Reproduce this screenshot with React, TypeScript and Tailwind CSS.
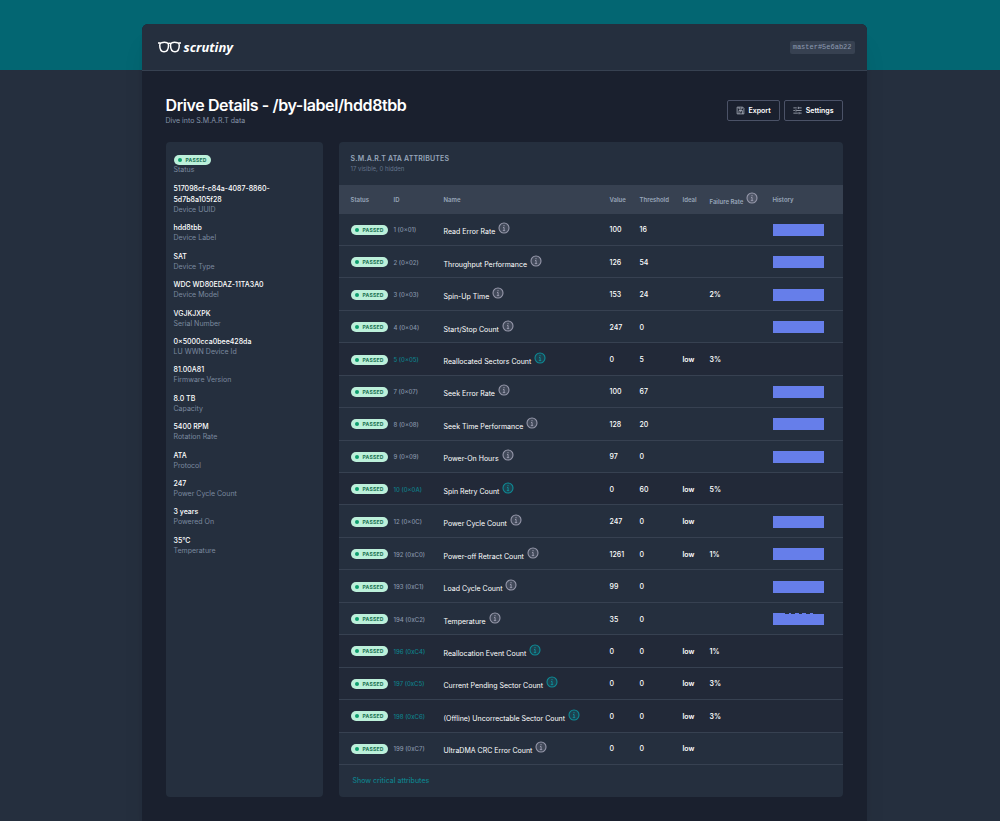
import { useState } from "react";
import type { ReactNode } from "react";
import clsx from "clsx";

type Attribute = {
  id: string;
  name: string;
  value: number;
  threshold: number;
  ideal?: string;
  failureRate?: string;
  critical?: boolean;
  history?: "flat" | "varied";
};

const details = [
  { label: "Device UUID", value: "517098cf-c84a-4087-8860-5d7b8a105f28" },
  { label: "Device Label", value: "hdd8tbb" },
  { label: "Device Type", value: "SAT" },
  { label: "Device Model", value: "WDC WD80EDAZ-11TA3A0" },
  { label: "Serial Number", value: "VGJKJXPK" },
  { label: "LU WWN Device Id", value: "0×5000cca0bee428da" },
  { label: "Firmware Version", value: "81.00A81" },
  { label: "Capacity", value: "8.0 TB" },
  { label: "Rotation Rate", value: "5400 RPM" },
  { label: "Protocol", value: "ATA" },
  { label: "Power Cycle Count", value: "247" },
  { label: "Powered On", value: "3 years" },
  { label: "Temperature", value: "35°C" },
];

const attributes: Attribute[] = [
  { id: "1 (0×01)", name: "Read Error Rate", value: 100, threshold: 16, history: "flat" },
  { id: "2 (0×02)", name: "Throughput Performance", value: 126, threshold: 54, history: "flat" },
  { id: "3 (0×03)", name: "Spin-Up Time", value: 153, threshold: 24, failureRate: "2%", history: "flat" },
  { id: "4 (0×04)", name: "Start/Stop Count", value: 247, threshold: 0, history: "flat" },
  { id: "5 (0×05)", name: "Reallocated Sectors Count", value: 0, threshold: 5, ideal: "low", failureRate: "3%", critical: true },
  { id: "7 (0×07)", name: "Seek Error Rate", value: 100, threshold: 67, history: "flat" },
  { id: "8 (0×08)", name: "Seek Time Performance", value: 128, threshold: 20, history: "flat" },
  { id: "9 (0×09)", name: "Power-On Hours", value: 97, threshold: 0, history: "flat" },
  { id: "10 (0×0A)", name: "Spin Retry Count", value: 0, threshold: 60, ideal: "low", failureRate: "5%", critical: true },
  { id: "12 (0×0C)", name: "Power Cycle Count", value: 247, threshold: 0, ideal: "low", history: "flat" },
  { id: "192 (0xC0)", name: "Power-off Retract Count", value: 1261, threshold: 0, ideal: "low", failureRate: "1%", history: "flat" },
  { id: "193 (0xC1)", name: "Load Cycle Count", value: 99, threshold: 0, history: "flat" },
  { id: "194 (0xC2)", name: "Temperature", value: 35, threshold: 0, history: "varied" },
  { id: "196 (0xC4)", name: "Reallocation Event Count", value: 0, threshold: 0, ideal: "low", failureRate: "1%", critical: true },
  { id: "197 (0xC5)", name: "Current Pending Sector Count", value: 0, threshold: 0, ideal: "low", failureRate: "3%", critical: true },
  { id: "198 (0xC6)", name: "(Offline) Uncorrectable Sector Count", value: 0, threshold: 0, ideal: "low", failureRate: "3%", critical: true },
  { id: "199 (0xC7)", name: "UltraDMA CRC Error Count", value: 0, threshold: 0, ideal: "low" },
];

function Logo() {
  return (
    <a href="#" className="flex items-center gap-[3px] text-white">
      <svg width="23" height="12" viewBox="0 0 46 24" fill="none" stroke="currentColor">
        <path d="M0 4h5M41 4h5M20 5.5c2-1.500 4-1.500 6 0" strokeWidth="3" />
        <path d="M7 3.500c4-1 8-1 11 0 2 .5 3 2 3 5 0 8-3 13-9 13s-8.500-5-8.500-13c0-3 1-4.500 3.500-5Z" strokeWidth="3" />
        <path d="M28 3.500c3-1 7-1 11 0 2.500.5 3.500 2 3.500 5 0 8-2.500 13-8.500 13s-9-5-9-13c0-3 1-4.500 3-5Z" strokeWidth="3" />
      </svg>
      <span className="font-['Open_Sans'] text-[13px] leading-4 font-bold italic">scrutiny</span>
    </a>
  );
}

function InfoIcon({ critical }: { critical?: boolean }) {
  return (
    <svg
      width="12"
      height="12"
      viewBox="0 0 24 24"
      fill="none"
      stroke="currentColor"
      className={clsx("ml-[3px] inline-block align-baseline", critical ? "text-[#0f8a95]" : "text-[#9698aa]")}
    >
      <circle cx="12" cy="12" r="10" strokeWidth="2.2" fill="currentColor" fillOpacity="0.25" />
      <path d="M12 6v2.6M10 11h2.2v6M9.6 17.2h4.8" strokeWidth="2" />
    </svg>
  );
}

function PassedBadge() {
  return (
    <span className="inline-flex h-[10px] items-center gap-1 rounded-full bg-[#bcf0da] px-1 text-[#176f4f]">
      <span className="size-1 rounded-full bg-[#0e9f6e]" />
      <span className="text-[5px] leading-[10px] font-bold tracking-wider">PASSED</span>
    </span>
  );
}

function HistoryChart({ kind }: { kind: "flat" | "varied" }) {
  return (
    <svg width="51" height="12" viewBox="0 0 51 12" fill="#667eea" className="block">
      {kind === "flat" ? (
        <path d="M0 0h51v12H0Z" />
      ) : (
        <path d="M0 0h12v1h4V0h2v1h4V0h4v1h3V0h4v1h4V0h3v1h11v11H0Z" />
      )}
    </svg>
  );
}

function ToolButton({ icon, children }: { icon: ReactNode; children: ReactNode }) {
  return (
    <button className="flex h-[21px] items-center gap-1 rounded-xs border border-[#4b5267] px-2 text-[7px] leading-3 font-semibold text-white">
      {icon}
      {children}
    </button>
  );
}

export default function App() {
  const [onlyCritical, setOnlyCritical] = useState(false);
  const rows = onlyCritical ? attributes.filter((a) => a.critical) : attributes;

  return (
    <div className="relative flex min-h-screen justify-center bg-[#252f3e] pt-6 pr-6 pl-8 font-['Inter',sans-serif] text-[7px] text-white">
      <div className="absolute inset-x-0 top-0 h-[70px] bg-[#036672]" />

      <div className="relative flex w-full max-w-[725px] flex-col rounded-t-md bg-[#1a202e] shadow-xl">
        <header className="flex h-[47px] items-center justify-between rounded-t-md border-b border-[#374151] bg-[#252f3e] pr-3 pl-4">
          <Logo />
          <code className="rounded-xs bg-[#374151] px-[3px] font-['Liberation_Mono',monospace] text-[7px] leading-[13px] text-[#8d9ab0]">
            master#5e6ab22
          </code>
        </header>

        <main className="flex flex-1 flex-col p-6">
          <div className="flex items-center justify-between">
            <div>
              <h1 className="text-base leading-5 font-semibold tracking-tight">Drive Details - /by-label/hdd8tbb</h1>
              <p className="leading-[11px] text-[#8694a9]">Dive into S.M.A.R.T data</p>
            </div>
            <div className="flex gap-1">
              <ToolButton
                icon={
                  <svg width="9" height="9" viewBox="0 0 24 24" fill="none" stroke="currentColor" strokeWidth="2" className="text-[#b4b9c6]">
                    <path d="M3 3h15l3 3v15H3V3ZM8 3v5h8V3M8 21v-9h9v9M12.5 12v5" />
                  </svg>
                }
              >
                Export
              </ToolButton>
              <ToolButton
                icon={
                  <svg width="9" height="9" viewBox="0 0 24 24" fill="none" stroke="currentColor" strokeWidth="2" className="text-[#b4b9c6]">
                    <path d="M1 5h9M14 5h9M14 2v6M1 12h4M9 12h14M8 9v6M1 19h12M17 19h6M16 16v6" />
                  </svg>
                }
              >
                Settings
              </ToolButton>
            </div>
          </div>

          <div className="mt-4 flex flex-1 items-stretch gap-4">
            <aside className="w-[157px] shrink-0 rounded-sm bg-[#252f3e] px-2 py-3">
              <div className="flex pt-px">
                <PassedBadge />
              </div>
              <div className="leading-[10px] text-[#7b899f]">Status</div>
              <dl className="mt-2 flex h-[373px] flex-col justify-between">
                {details.map((d) => (
                  <div key={d.label} className="flex flex-col-reverse">
                    <dt className="leading-[10px] text-[#7b899f]">{d.label}</dt>
                    <dd className="max-w-28 leading-[11px] font-medium">{d.value}</dd>
                  </div>
                ))}
              </dl>
            </aside>

            <section className="min-w-0 flex-1 rounded-sm bg-[#252f3e]">
              <div className="h-[43px] px-3 pt-3">
                <h2 className="leading-[10px] font-semibold tracking-wide text-[#97a6ba]">S.M.A.R.T ATA ATTRIBUTES</h2>
                <p className="text-[6px] leading-[10px] text-[#64748b]">17 visible, 0 hidden</p>
              </div>
              <table className="h-[580px] w-full table-fixed text-left leading-[11px]">
                <colgroup>
                  <col className="w-[55px]" />
                  <col className="w-[50px]" />
                  <col />
                  <col className="w-[30px]" />
                  <col className="w-[43px]" />
                  <col className="w-[27px]" />
                  <col className="w-[63px]" />
                  <col className="w-[70px]" />
                </colgroup>
                <thead>
                  <tr className="h-[29px] bg-[#374151] text-[6px] text-[#97a6ba]">
                    <th className="pl-3 font-semibold">Status</th>
                    <th className="font-semibold">ID</th>
                    <th className="font-semibold">Name</th>
                    <th className="font-semibold">Value</th>
                    <th className="font-semibold">Threshold</th>
                    <th className="font-semibold">Ideal</th>
                    <th className="font-semibold">
                      Failure Rate
                      <InfoIcon />
                    </th>
                    <th className="font-semibold">History</th>
                  </tr>
                </thead>
                <tbody>
                  {rows.map((a) => (
                    <tr key={a.id} className={clsx("border-b border-[#374151]", a.critical && "bg-[#222938]")}>
                      <td className="pt-px pl-3">
                        <div className="flex">
                          <PassedBadge />
                        </div>
                      </td>
                      <td className={clsx("pt-px text-[6px] font-medium", a.critical ? "text-[#0e808a]" : "text-[#8795aa]")}>{a.id}</td>
                      <td className="pt-px whitespace-nowrap">
                        {a.name}
                        <InfoIcon critical={a.critical} />
                      </td>
                      <td className="pt-px font-medium">{a.value}</td>
                      <td className="pt-px font-medium">{a.threshold}</td>
                      <td className="pt-px font-semibold">{a.ideal}</td>
                      <td className="pt-px font-semibold">{a.failureRate}</td>
                      <td className="pt-px">{a.history && <HistoryChart kind={a.history} />}</td>
                    </tr>
                  ))}
                </tbody>
              </table>
              <button
                className="ml-[14px] h-8 font-medium text-[#0e808a]"
                onClick={() => setOnlyCritical(!onlyCritical)}
              >
                Show critical attributes
              </button>
            </section>
          </div>
        </main>
      </div>
    </div>
  );
}
